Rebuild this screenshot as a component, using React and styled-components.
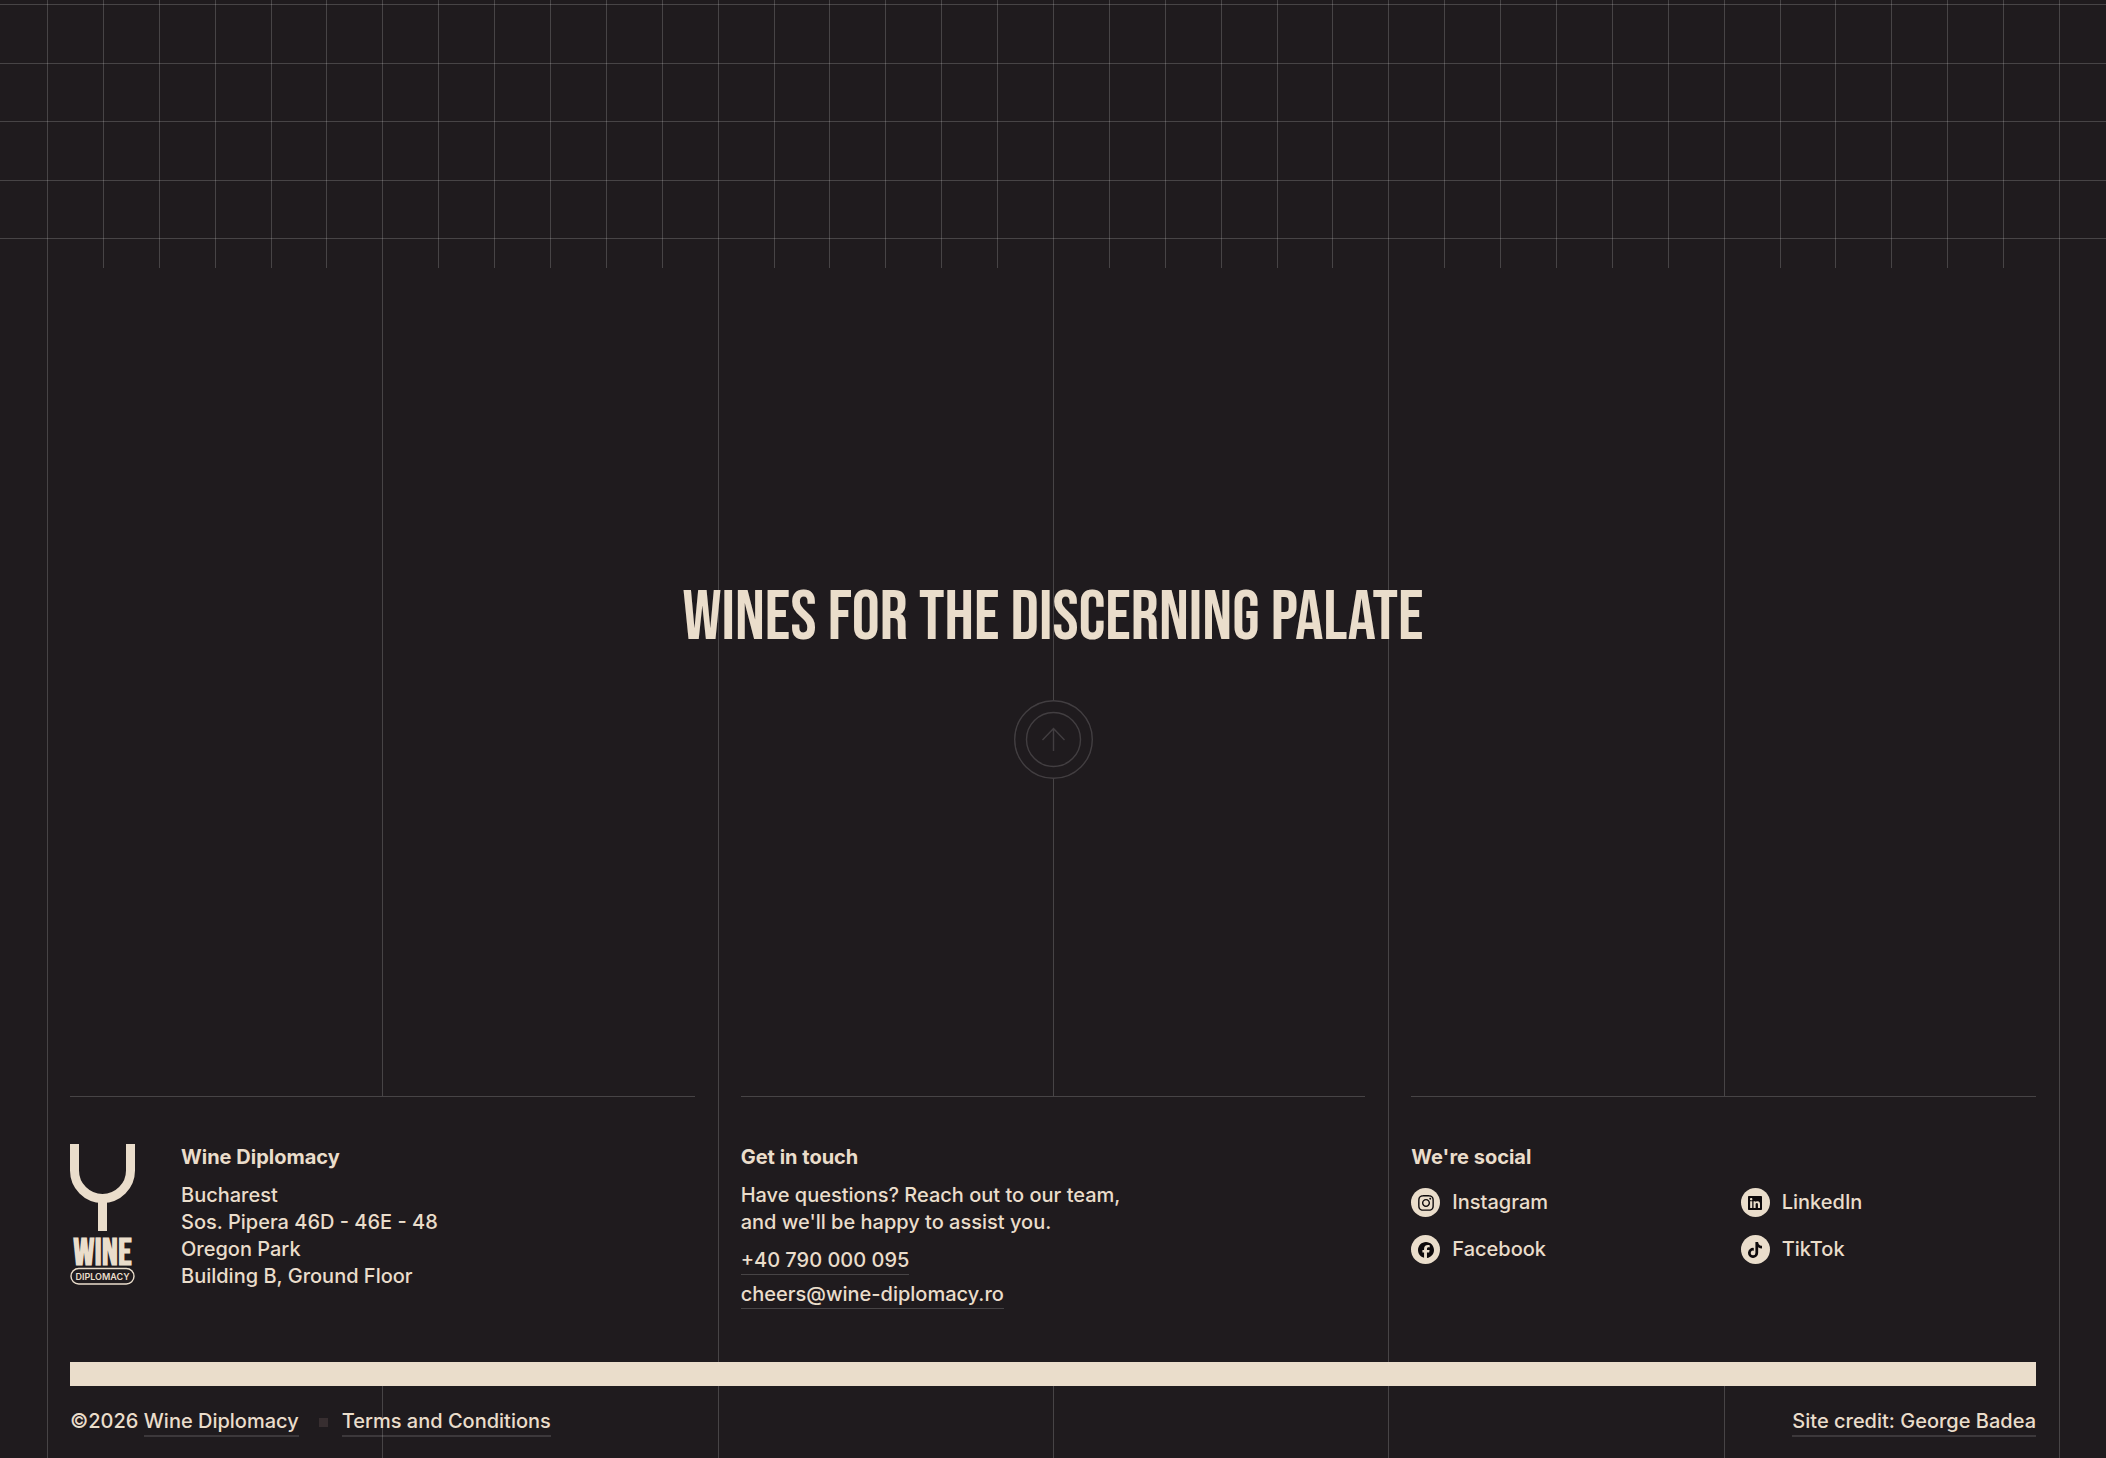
import React from "react"
import styled, { createGlobalStyle } from "styled-components"
import { FaInstagram, FaLinkedin, FaFacebook, FaTiktok } from "react-icons/fa6"

const cream = "#eaddcb"
const dark = "#1f1b1e"
const line = "rgba(255, 255, 255, 0.18)"
const headingFont = `"Bebas Neue", "Roboto Condensed", Roboto, sans-serif`

const GlobalStyle = createGlobalStyle`
  * {
    box-sizing: border-box;
  }

  body {
    margin: 0;
    background: ${dark};
    color: ${cream};
    font-family: Satoshi, Inter, sans-serif;
    font-size: 20px;
    font-weight: 500;
    line-height: 27px;
  }

  a {
    color: inherit;
    text-decoration: none;
  }
`

const Page = styled.div`
  display: flex;
  flex-direction: column;
  min-height: 100vh;
`

/* children share one cell, so the guides run behind the content */
const Stack = styled.div`
  display: grid;

  > * {
    grid-area: 1 / 1;
  }
`

const Guides = styled.div`
  display: grid;
  grid-template-columns: repeat(${(p) => p.$count}, 1fr);
  margin: 0 46px 0 47px;
  border-right: 1px solid ${line};
`

const Guide = styled.div`
  border-left: 1px solid ${line};
`

const Band = styled(Stack)`
  height: 268px;
`

const Rows = styled.div`
  display: grid;
  grid-template-rows: repeat(4, 1fr) 30px;
  padding-top: 4px;
`

const Row = styled.div`
  border-top: 1px solid ${line};
`

const Hero = styled(Stack)`
  min-height: 828px;
`

const HeroContent = styled.div`
  display: flex;
  flex-direction: column;
  align-items: center;
  justify-content: center;
  gap: 47px;
  padding-bottom: 2px;
`

const Title = styled.h1`
  margin: 0;
  font-family: ${headingFont};
  font-size: 70px;
  font-weight: 400;
  line-height: 70px;
  text-align: center;
  text-transform: uppercase;
`

const TopButton = styled.button`
  display: block;
  padding: 0;
  border: 0;
  border-radius: 50%;
  background: ${dark};
  color: #423e41;
  line-height: 0;
  cursor: pointer;
`

const Columns = styled.div`
  display: grid;
  grid-template-columns: repeat(3, 1fr);
  margin: 0 46px 0 47px;
  border-right: 1px solid ${line};
`

const Column = styled.section`
  padding: 0 23px 0 22px;
  border-left: 1px solid ${line};
`

const ColumnInner = styled.div`
  display: flex;
  gap: 46px;
  padding: 47px 0 53px;
  border-top: 1px solid ${line};
`

const ColumnBody = styled.div`
  flex: 1;
`

const ColumnTitle = styled.h2`
  margin: 0 0 11px;
  font-size: 20px;
  font-weight: 700;
  line-height: 27px;
`

const Address = styled.address`
  font-style: normal;
`

const Text = styled.p`
  margin: 0;
`

const Contacts = styled.div`
  display: flex;
  flex-direction: column;
  align-items: flex-start;
  gap: 6px;
  margin-top: 11px;
`

const ContactLink = styled.a`
  border-bottom: 1px solid ${line};
`

const Socials = styled.ul`
  display: grid;
  grid-template-columns: 1fr 1fr;
  gap: 18px 34px;
  margin: 17px 0 0;
  padding: 0;
  list-style: none;
`

const SocialLink = styled.a`
  display: flex;
  align-items: center;
  gap: 12px;
  width: fit-content;
  line-height: 29px;
`

const SocialIcon = styled.span`
  display: flex;
  align-items: center;
  justify-content: center;
  width: 29px;
  height: 29px;
  border-radius: 50%;
  background: ${cream};
  color: #0d090b;
`

const BarWrap = styled.div`
  margin: 0 46px 0 47px;
  padding: 0 23px 0 22px;
  border: solid ${line};
  border-width: 0 1px;
`

const Bar = styled.div`
  height: 24px;
  background: ${cream};
`

const BottomRow = styled.div`
  display: flex;
  align-items: center;
  justify-content: space-between;
  margin: 0 70px;
  padding: 22px 0 21px;
`

const Legal = styled.div`
  display: flex;
  align-items: center;
  gap: 14px;
`

const FooterLink = styled.a`
  display: inline-block;
  border-bottom: 2px solid rgba(255, 255, 255, 0.13);
`

const Square = styled.span`
  width: 9px;
  height: 9px;
  margin-left: 6px;
  background: #372e30;
`

const Logo = () => (
  <svg width="65" height="141" viewBox="0 0 65 141" role="img" aria-label="Wine Diplomacy">
    <path d="M4.5 0V26.5a28 28 0 0 0 56 0V0" fill="none" stroke={cream} strokeWidth="9" />
    <path d="M28 55h9v32h-9z" fill={cream} />
    <text x="32.5" y="121" textAnchor="middle" fill={cream} fontFamily={headingFont} fontSize="38" fontWeight="700">
      WINE
    </text>
    <rect x="1" y="124.5" width="63" height="15.5" rx="7.75" fill="none" stroke={cream} strokeWidth="1.4" />
    <text x="32.5" y="135.5" textAnchor="middle" fill={cream} fontFamily="Inter, sans-serif" fontSize="9" fontWeight="600">
      DIPLOMACY
    </text>
  </svg>
)

const ArrowUp = () => (
  <svg width="79" height="79" viewBox="0 0 79 79" fill="none" stroke="currentColor">
    <circle cx="39.5" cy="39.5" r="38.8" strokeWidth="1.4" />
    <circle cx="39.5" cy="39.5" r="27" strokeWidth="1.4" />
    <path d="M39.5 51V28.5M28.5 40l11-11.5 11 11.5" strokeWidth="1.4" />
  </svg>
)

const socials = [
  { name: "Instagram", href: "#instagram", Icon: FaInstagram, size: 18 },
  { name: "LinkedIn", href: "#linkedin", Icon: FaLinkedin, size: 16 },
  { name: "Facebook", href: "#facebook", Icon: FaFacebook, size: 16 },
  { name: "TikTok", href: "#tiktok", Icon: FaTiktok, size: 16 },
]

const GuideLines = ({ count }) => (
  <Guides $count={count} aria-hidden="true">
    {Array.from({ length: count }, (_, i) => (
      <Guide key={i} />
    ))}
  </Guides>
)

const App = () => {
  const scrollToTop = () => window.scrollTo({ top: 0, behavior: "smooth" })

  return (
    <Page>
      <GlobalStyle />
      <Band aria-hidden="true">
        <GuideLines count={36} />
        <Rows>
          {[0, 1, 2, 3, 4].map((i) => (
            <Row key={i} />
          ))}
        </Rows>
      </Band>

      <Hero as="main">
        <GuideLines count={6} />
        <HeroContent>
          <Title>Wines for the discerning palate</Title>
          <TopButton type="button" aria-label="Back to top" onClick={scrollToTop}>
            <ArrowUp />
          </TopButton>
        </HeroContent>
      </Hero>

      <footer>
        <Columns>
          <Column>
            <ColumnInner>
              <Logo />
              <ColumnBody>
                <ColumnTitle>Wine Diplomacy</ColumnTitle>
                <Address>
                  Bucharest
                  <br />
                  Sos. Pipera 46D - 46E - 48
                  <br />
                  Oregon Park
                  <br />
                  Building B, Ground Floor
                </Address>
              </ColumnBody>
            </ColumnInner>
          </Column>

          <Column>
            <ColumnInner>
              <ColumnBody>
                <ColumnTitle>Get in touch</ColumnTitle>
                <Text>
                  Have questions? Reach out to our team,
                  <br />
                  and we'll be happy to assist you.
                </Text>
                <Contacts>
                  <ContactLink href="tel:+40790000095">+40 790 000 095</ContactLink>
                  <ContactLink href="mailto:cheers@wine-diplomacy.ro">cheers@wine-diplomacy.ro</ContactLink>
                </Contacts>
              </ColumnBody>
            </ColumnInner>
          </Column>

          <Column>
            <ColumnInner>
              <ColumnBody>
                <ColumnTitle>We're social</ColumnTitle>
                <Socials>
                  {socials.map(({ name, href, Icon, size }) => (
                    <li key={name}>
                      <SocialLink href={href}>
                        <SocialIcon>
                          <Icon size={size} />
                        </SocialIcon>
                        {name}
                      </SocialLink>
                    </li>
                  ))}
                </Socials>
              </ColumnBody>
            </ColumnInner>
          </Column>
        </Columns>

        <BarWrap>
          <Bar />
        </BarWrap>

        <Stack>
          <GuideLines count={6} />
          <BottomRow>
            <Legal>
              <span>
                ©2026 <FooterLink href="#home">Wine Diplomacy</FooterLink>
              </span>
              <Square />
              <FooterLink href="#terms">Terms and Conditions</FooterLink>
            </Legal>
            <FooterLink href="#credit">Site credit: George Badea</FooterLink>
          </BottomRow>
        </Stack>
      </footer>
    </Page>
  )
}

export default App
